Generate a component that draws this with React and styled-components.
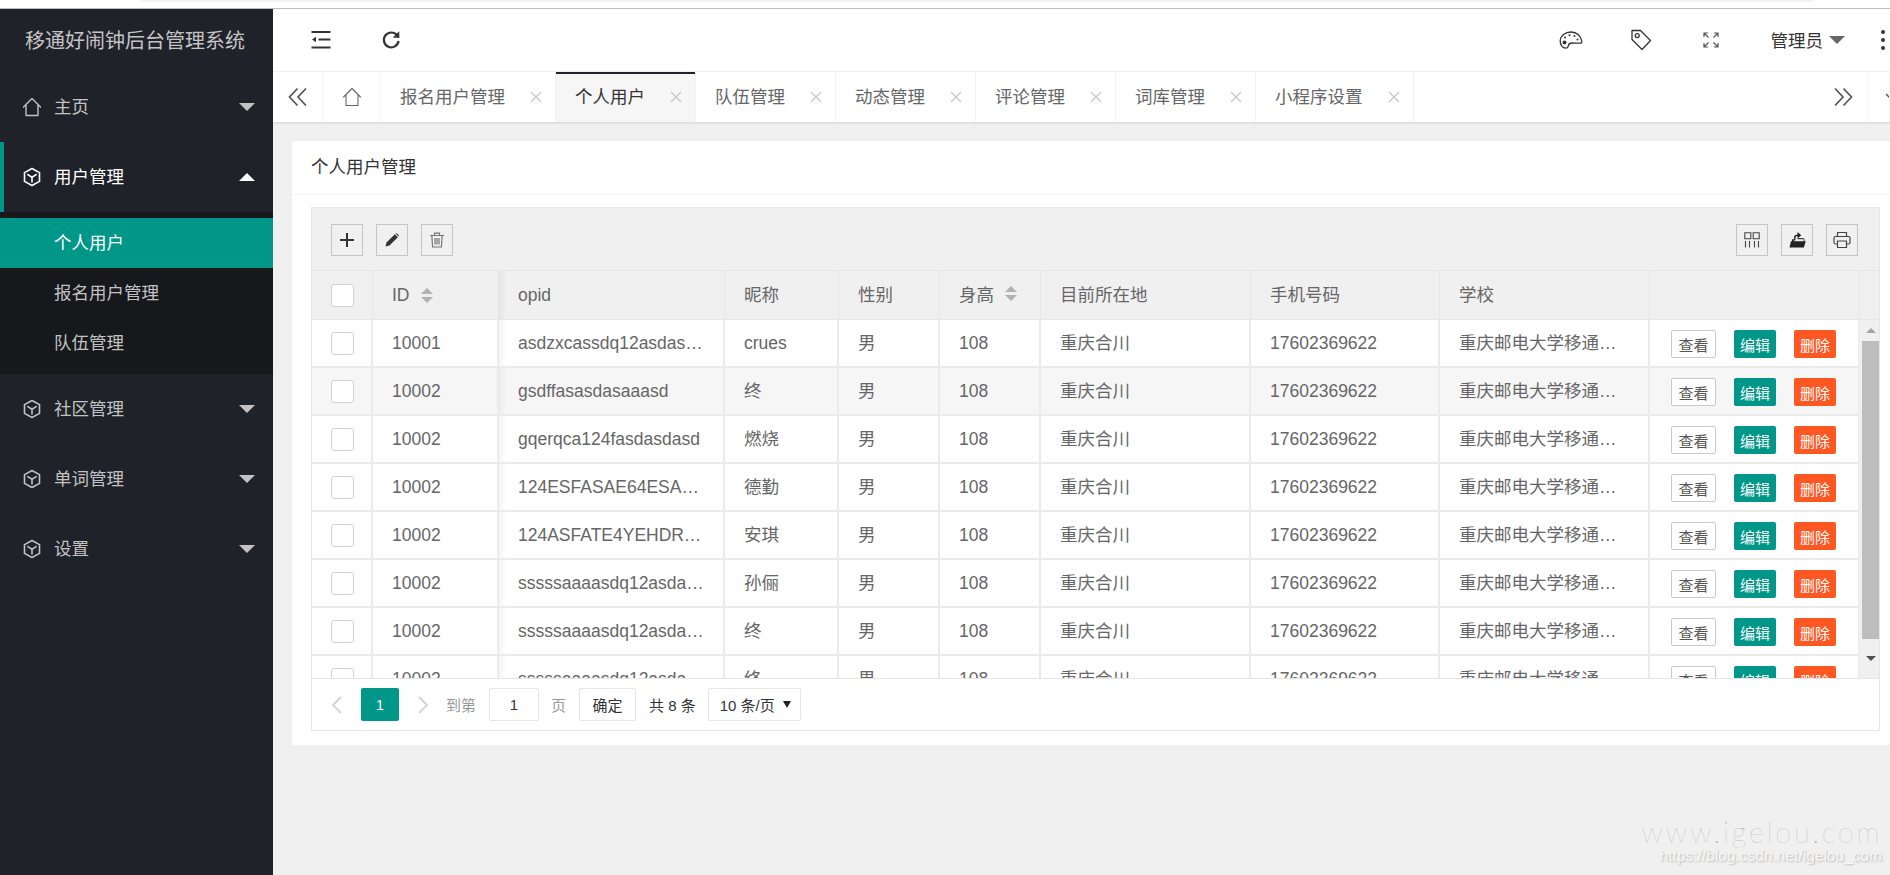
import React from 'react';
import styled, { createGlobalStyle } from 'styled-components';

const FONT = '"Liberation Sans", "Noto Sans CJK SC", sans-serif';
const DATA_COLUMNS = '61px 126px 226px 114px 101px 101px 210px 189px 210px 210px';

const rows = [
  { id: '10001', opid: 'asdzxcassdq12asdasdasdasd', name: 'crues' },
  { id: '10002', opid: 'gsdffasasdasaaasd', name: '终', striped: true },
  { id: '10002', opid: 'gqerqca124fasdasdasd', name: '燃烧' },
  { id: '10002', opid: '124ESFASAE64ESAFASDFASDF', name: '德勤' },
  { id: '10002', opid: '124ASFATE4YEHDRTHDFGDFG', name: '安琪' },
  { id: '10002', opid: 'sssssaaaasdq12asdasdasdasd', name: '孙俪' },
  { id: '10002', opid: 'sssssaaaasdq12asdasdasdasd', name: '终' },
  { id: '10002', opid: 'sssssaaaasdq12asdasdasdasd', name: '终' },
];

const tabs = [
  { label: '报名用户管理' },
  { label: '个人用户', active: true },
  { label: '队伍管理' },
  { label: '动态管理' },
  { label: '评论管理' },
  { label: '词库管理' },
  { label: '小程序设置' },
];

const Svg = ({ size = 20, children, sw = 1.4 }) => (
  <svg width={size} height={size} viewBox="0 0 20 20" fill="none" stroke="currentColor" strokeWidth={sw} strokeLinecap="round" strokeLinejoin="round">
    {children}
  </svg>
);

const HomeIcon = (p) => (
  <Svg {...p}>
    <path d="M1.5 10 10 1.5 18.5 10M4 8.5V18.5H16V8.5" />
  </Svg>
);

const CubeIcon = () => (
  <Svg sw={1.6}>
    <path d="M10 1.5 17.5 5.6V14.4L10 18.5 2.5 14.4V5.6Z" />
    <path d="M5.8 7.6 10 10.2 14.2 7.6M10 10.2V15" />
  </Svg>
);

const ShrinkIcon = () => (
  <svg width="20" height="18" viewBox="0 0 20 18" fill="#333">
    <rect x="0.5" y="0" width="19" height="2" />
    <rect x="7.5" y="7.5" width="12" height="2" />
    <rect x="0.5" y="15.5" width="19" height="2" />
    <path d="M1 8.5 5 5.8V11.2Z" />
  </svg>
);

const RefreshIcon = () => (
  <svg width="20" height="20" viewBox="0 0 20 20" fill="none">
    <path d="M16 5.2A7.4 7.4 0 1 0 17.6 11" stroke="#333" strokeWidth="2.2" />
    <path d="M11.8 7.6 18.4 7.9 18.2 1.2Z" fill="#333" />
  </svg>
);

const PaletteIcon = () => (
  <svg width="24" height="20" viewBox="0 0 24 20" fill="none" stroke="#333" strokeWidth="1.3">
    <path d="M12 2C6 2 1.5 6 1.2 10.5 1 14.5 3.4 18 7 18.2c2.2.1 2-1.6 2.4-3 .5-1.6 1.8-2.2 3.8-2.2 2.6 0 4.2.2 7.6.2 1.8 0 2.3-.6 2-1.8C22 6 18 2 12 2Z" />
    <g fill="#333" stroke="none">
      <circle cx="6" cy="7.5" r="1" />
      <circle cx="10.5" cy="5.2" r="1" />
      <circle cx="15.5" cy="6" r="1" />
      <circle cx="18.5" cy="9.5" r="1" />
      <circle cx="5.5" cy="12.5" r="2" />
    </g>
  </svg>
);

const TagIcon = () => (
  <svg width="22" height="22" viewBox="0 0 22 22" fill="none" stroke="#333" strokeWidth="1.3">
    <path d="M2 1.5 10.5 1.5 20.5 11.5 12 20.5 2 10.5Z" strokeLinejoin="round" />
    <circle cx="7.2" cy="6.6" r="2" />
  </svg>
);

const FullscreenIcon = () => (
  <svg width="18" height="18" viewBox="0 0 18 18" fill="none" stroke="#555" strokeWidth="1.2">
    <path d="M2 6V2H6M2 2 6.5 6.5M16 6V2H12M16 2 11.5 6.5M2 12V16H6M2 16 6.5 11.5M16 12V16H12M16 16 11.5 11.5" />
  </svg>
);

const ChevronsIcon = ({ flip }) => (
  <svg width="20" height="20" viewBox="0 0 20 20" fill="none" stroke="#555" strokeWidth="1.7" style={flip ? { transform: 'scaleX(-1)' } : undefined}>
    <path d="M9.5 1.5 1.5 10 9.5 18.5M18 1.5 10 10 18 18.5" />
  </svg>
);

const ChevronDownIcon = () => (
  <svg width="14" height="8" viewBox="0 0 14 8" fill="none" stroke="#555" strokeWidth="1.4">
    <path d="M1 1 7 7 13 1" />
  </svg>
);

const PlusIcon = () => (
  <svg width="18" height="18" viewBox="0 0 18 18" stroke="#333" strokeWidth="2">
    <path d="M9 2V16M2 9H16" />
  </svg>
);

const PencilIcon = () => (
  <svg width="14" height="14" viewBox="0 0 14 14" fill="#333">
    <path d="M0.5 13.5 1.5 9.5 9.8 1.2 12.8 4.2 4.5 12.5Z" />
    <path d="M10.6.6 11.4 0 14 2.6 13.4 3.4Z" />
  </svg>
);

const TrashIcon = () => (
  <svg width="16" height="16" viewBox="0 0 16 16" fill="none" stroke="#777" strokeWidth="1.2">
    <path d="M1 3.5H15M5.5 3.5V1.2H10.5V3.5M2.8 3.5 3.6 15H12.4L13.2 3.5M6 6V12.5M8 6V12.5M10 6V12.5" />
  </svg>
);

const ColumnsIcon = () => (
  <svg width="16" height="16" viewBox="0 0 16 16" fill="none" stroke="#444" strokeWidth="1.1">
    <path d="M.8.8H6.8V6.8H.8ZM9.2.8H15.2V6.8H9.2Z" />
    <path d="M1.5 9V15.5M5.5 9V15.5M10.5 9V15.5M14.5 9V15.5" />
  </svg>
);

const ExportIcon = () => (
  <svg width="17" height="17" viewBox="0 0 16 16">
    <path d="M2.8 7.8H4.5V9.6H13.8V7H14.5V9.6H15.8L14 15.5H.5L1.8 9.6H2.8Z" fill="#222" />
    <path d="M5.4 9V6C5.4 4.6 6.5 4 8.5 4" fill="none" stroke="#222" strokeWidth="1.3" />
    <path d="M8 1 11.6 4 8 7Z" fill="#222" />
    <path d="M8 7.2H13.8" stroke="#222" strokeWidth="1" />
  </svg>
);

const PrintIcon = () => (
  <svg width="18" height="18" viewBox="0 0 18 18" fill="none" stroke="#444" strokeWidth="1.2" strokeLinejoin="round">
    <path d="M4.5 5.5V1.5H13.5V5.5M4.5 13H2.5Q1 13 1 11.5V7Q1 5.5 2.5 5.5H15.5Q17 5.5 17 7V11.5Q17 13 15.5 13H13.5" />
    <path d="M4.5 10H13.5V16.5H4.5Z" />
  </svg>
);

const GlobalStyle = createGlobalStyle`
  html, body {
    margin: 0;
    padding: 0;
    background: #f0f0f0;
    overflow: hidden;
  }
  * {
    box-sizing: border-box;
  }
`;

const Page = styled.div`
  width: 1890px;
  height: 875px;
  display: flex;
  flex-direction: column;
  overflow: hidden;
  font-family: ${FONT};
  font-size: 17.5px;
  color: #666;
  position: relative;
`;

const BrowserEdge = styled.div`
  height: 9px;
  flex: none;
  background: #fff;
  border-bottom: 1px solid #bdbdbd;
  padding-left: 141px;
  padding-right: 77px;
`;

const BrowserBar = styled.div`
  height: 2px;
  background: #f3f3f3;
`;

const Frame = styled.div`
  flex: 1;
  display: flex;
  min-height: 0;
`;

const Sidebar = styled.aside`
  width: 273px;
  flex: none;
  background: #20222a;
  display: flex;
  flex-direction: column;
`;

const Logo = styled.div`
  height: 63px;
  flex: none;
  padding-left: 25px;
  padding-bottom: 2px;
  display: flex;
  align-items: center;
  font-size: 20px;
  color: #c4c4c4;
  white-space: nowrap;
`;

const NavItem = styled.div`
  height: 70px;
  flex: none;
  display: flex;
  align-items: center;
  padding-left: 22px;
  padding-right: 18px;
  gap: 12px;
  color: ${(p) => (p.$open ? '#fff' : '#c2c2c2')};
  border-left: ${(p) => (p.$open ? '4px solid #009688' : 'none')};
  ${(p) => p.$open && 'padding-left: 18px;'}
`;

const NavLabel = styled.span`
  flex: 1;
  padding-bottom: 3px;
`;

const Caret = styled.i`
  width: 0;
  height: 0;
  border-left: 8px solid transparent;
  border-right: 8px solid transparent;
  ${(p) => (p.$up ? 'border-bottom: 8px solid currentColor;' : 'border-top: 8px solid currentColor;')}
`;

const SubMenu = styled.div`
  background: #17181c;
  padding: 6px 0;
  display: flex;
  flex-direction: column;
`;

const SubItem = styled.div`
  height: 50px;
  padding-left: 54px;
  padding-bottom: 3px;
  display: flex;
  align-items: center;
  color: ${(p) => (p.$active ? '#fff' : '#c2c2c2')};
  background: ${(p) => (p.$active ? '#009688' : 'transparent')};
`;

const Main = styled.main`
  flex: 1;
  min-width: 0;
  display: flex;
  flex-direction: column;
`;

const Header = styled.header`
  height: 63px;
  flex: none;
  background: #fff;
  border-bottom: 1px solid #f2f2f2;
  display: flex;
  align-items: center;
  padding-left: 38px;
  color: #333;
`;

const HeaderLeft = styled.div`
  flex: 1;
  display: flex;
  align-items: center;
  gap: 50px;
`;

const HeaderRight = styled.div`
  display: flex;
  align-items: center;
`;

const HeaderIcon = styled.span`
  width: 70px;
  display: flex;
  justify-content: center;
`;

const UserName = styled.span`
  display: flex;
  align-items: center;
  gap: 6px;
  margin-left: 25px;
  padding-bottom: 2px;
  color: #333;
  i {
    color: #666;
    margin-top: 2px;
  }
`;

const MoreDots = styled.span`
  display: flex;
  flex-direction: column;
  gap: 4px;
  margin-left: 36px;
  margin-right: 5px;
  i {
    width: 4px;
    height: 4px;
    background: #333;
    border-radius: 50%;
  }
`;

const TabBar = styled.nav`
  height: 50px;
  flex: none;
  background: #fff;
  display: flex;
  box-shadow: 0 1px 2px rgba(0, 0, 0, 0.12);
  position: relative;
`;

const TabSide = styled.div`
  width: ${(p) => p.$width}px;
  flex: none;
  display: flex;
  align-items: center;
  justify-content: ${(p) => (p.$start ? 'flex-start' : 'center')};
  padding-left: ${(p) => (p.$start ? '17px' : '0')};
  overflow: hidden;
  color: #666;
  border-right: 1px solid #f4f4f4;
  svg {
    flex: none;
  }
`;

const Tab = styled.div`
  flex: none;
  display: flex;
  align-items: center;
  padding-left: 19px;
  padding-right: 13px;
  gap: 25px;
  border-right: 1px solid #f2f2f2;
  color: ${(p) => (p.$active ? '#333' : '#666')};
  background: ${(p) => (p.$active ? '#f6f6f6' : '#fff')};
  box-shadow: ${(p) => (p.$active ? 'inset 0 2px 0 #20222a' : 'none')};
  white-space: nowrap;
`;

const TabLabel = styled.span`
  padding-bottom: 3px;
`;

const TabClose = styled.svg`
  width: 12px;
  height: 12px;
  stroke: #c6c6c6;
  stroke-width: 1.2;
  flex: none;
`;

const TabFiller = styled.div`
  flex: 1;
`;

const Content = styled.div`
  flex: 1;
  padding: 19px 0 0 19px;
  background: #f0f0f0;
`;

const Card = styled.section`
  background: #fff;
  padding: 0 10px 14px 19px;
  border-radius: 2px;
`;

const CardTitle = styled.div`
  height: 54px;
  margin: 0 -10px 12px -19px;
  padding-left: 19px;
  padding-bottom: 4px;
  display: flex;
  align-items: center;
  border-bottom: 1px solid #f6f6f6;
  color: #333;
`;

const TableBox = styled.div`
  border: 1px solid #e6e6e6;
  display: flex;
  flex-direction: column;
`;

const Toolbar = styled.div`
  height: 63px;
  background: #f0f0f0;
  display: flex;
  align-items: center;
  justify-content: space-between;
  padding: 1px 21px 0 19px;
  border-bottom: 1px solid #e6e6e6;
`;

const ToolGroup = styled.div`
  display: flex;
  gap: 13px;
`;

const ToolButton = styled.button`
  width: 32px;
  height: 32px;
  padding: 0;
  background: transparent;
  border: 1px solid #c4c4c4;
  display: flex;
  align-items: center;
  justify-content: center;
`;

const HeadRow = styled.div`
  display: grid;
  grid-template-columns: ${DATA_COLUMNS} 21px;
  height: 49px;
  background: #f0f0f0;
  border-bottom: 1px solid #e6e6e6;
`;

const Cell = styled.div`
  display: flex;
  align-items: center;
  gap: 11px;
  padding: 0 19px;
  min-width: 0;
  border-right: 1px solid #e6e6e6;
  ${(p) => p.$cjk && 'padding-bottom: 3px;'}
  ${(p) => p.$shaded && 'background: linear-gradient(to right, rgba(0, 0, 0, 0.045), transparent 8px);'}
`;

const EllipsisText = styled.span`
  white-space: nowrap;
  overflow: hidden;
  text-overflow: ellipsis;
`;

const SortCarets = styled.span`
  display: flex;
  flex-direction: column;
  gap: 3px;
  i {
    width: 0;
    height: 0;
    border-left: 6px solid transparent;
    border-right: 6px solid transparent;
  }
  i:first-child {
    border-bottom: 6px solid #b2b2b2;
  }
  i:last-child {
    border-top: 6px solid #b2b2b2;
  }
`;

const Checkbox = styled.span`
  width: 23px;
  height: 23px;
  background: #fff;
  border: 1px solid #d2d2d2;
  border-radius: 3px;
  flex: none;
`;

const BodyWrap = styled.div`
  height: 358px;
  display: flex;
  overflow: hidden;
`;

const BodyRows = styled.div`
  flex: 1;
  min-width: 0;
`;

const Row = styled.div`
  display: grid;
  grid-template-columns: ${DATA_COLUMNS};
  height: 48px;
  background: ${(p) => (p.$striped ? '#f6f6f6' : '#fff')};
  border-bottom: 2px solid #ebebeb;
  ${Cell} {
    border-right-width: 2px;
    border-right-color: #ebebeb;
  }
`;

const ActionCell = styled(Cell)`
  gap: 18px;
  padding: 2px 0 0 21px;
`;

const RowButton = styled.button`
  height: 28px;
  width: ${(p) => (p.$kind === 'plain' ? 45 : 42)}px;
  padding: 0;
  border-radius: 2px;
  font-family: ${FONT};
  font-size: 15px;
  color: ${(p) => (p.$kind === 'plain' ? '#555' : '#fff')};
  background: ${(p) => ({ plain: '#fff', edit: '#009688', del: '#ff5722' })[p.$kind]};
  border: ${(p) => (p.$kind === 'plain' ? '1px solid #c9c9c9' : 'none')};
`;

const Scrollbar = styled.div`
  width: 20px;
  flex: none;
  background: #f0f0f0;
  display: flex;
  flex-direction: column;
  align-items: flex-end;
`;

const ScrollArrow = styled.div`
  width: 100%;
  height: ${(p) => p.$height}px;
  flex: none;
  display: flex;
  justify-content: center;
  align-items: center;
  padding-left: 3px;
  i {
    width: 0;
    height: 0;
    border-left: 5px solid transparent;
    border-right: 5px solid transparent;
    ${(p) => (p.$down ? 'border-top: 5px solid #505050;' : 'border-bottom: 5px solid #a3a3a3;')}
  }
`;

const ScrollThumb = styled.div`
  width: 17px;
  height: 298px;
  flex: none;
  background: #bdbdbd;
`;

const Pagination = styled.div`
  height: 52px;
  background: #fff;
  border-top: 1px solid #e6e6e6;
  display: flex;
  align-items: center;
  padding-left: 19px;
  font-size: 15px;
  color: #333;
`;

const PageArrow = styled.svg`
  width: 12px;
  height: 20px;
  stroke: #d2d2d2;
  stroke-width: 1.8;
  fill: none;
  flex: none;
  margin: ${(p) => p.$margin};
`;

const PageCurrent = styled.span`
  width: 38px;
  height: 33px;
  background: #009688;
  color: #fff;
  border-radius: 2px;
  font-size: 15px;
  display: flex;
  align-items: center;
  justify-content: center;
`;

const PageHint = styled.span`
  color: #999;
  margin: ${(p) => p.$margin};
`;

const PageBox = styled.span`
  height: 33px;
  width: ${(p) => p.$width}px;
  flex: none;
  background: #fff;
  border: 1px solid #e6e6e6;
  border-radius: 2px;
  display: flex;
  align-items: center;
  justify-content: ${(p) => (p.$spread ? 'space-between' : 'center')};
  padding: ${(p) => (p.$spread ? '0 9px 0 11px' : '0')};
  color: #333;
  i {
    width: 0;
    height: 0;
    border-left: 4px solid transparent;
    border-right: 4px solid transparent;
    border-top: 7px solid #222;
  }
`;

const PageTotal = styled.span`
  margin: 0 12px 0 13px;
  color: #333;
`;

const Watermark = styled.div`
  position: absolute;
  right: 8px;
  bottom: 11px;
  text-align: right;
`;

const WatermarkSite = styled.div`
  font-family: Lato, sans-serif;
  font-weight: 100;
  font-size: 29px;
  letter-spacing: 2.7px;
  line-height: 32px;
  color: #b0b0b0;
`;

const WatermarkLink = styled.div`
  font-family: ${FONT};
  font-size: 15.5px;
  line-height: 16px;
  color: #f7f7f7;
  text-shadow: 1px 1px 2px #b4b4b4;
`;

const SideNav = ({ label, icon, open }) => (
  <NavItem $open={open}>
    {icon}
    <NavLabel>{label}</NavLabel>
    <Caret $up={open} />
  </NavItem>
);

const TableRow = ({ id, opid, name, striped }) => (
  <Row $striped={striped}>
    <Cell><Checkbox /></Cell>
    <Cell>{id}</Cell>
    <Cell $shaded><EllipsisText>{opid}</EllipsisText></Cell>
    <Cell $cjk={name !== 'crues'}>{name}</Cell>
    <Cell $cjk>男</Cell>
    <Cell>108</Cell>
    <Cell $cjk>重庆合川</Cell>
    <Cell>17602369622</Cell>
    <Cell $cjk><EllipsisText>重庆邮电大学移通学院数字媒体</EllipsisText></Cell>
    <ActionCell>
      <RowButton $kind="plain">查看</RowButton>
      <RowButton $kind="edit">编辑</RowButton>
      <RowButton $kind="del">删除</RowButton>
    </ActionCell>
  </Row>
);

const App = () => {
  return (
    <Page>
      <GlobalStyle />
      <BrowserEdge><BrowserBar /></BrowserEdge>
      <Frame>
        <Sidebar>
          <Logo>移通好闹钟后台管理系统</Logo>
          <SideNav label="主页" icon={<HomeIcon />} />
          <SideNav label="用户管理" icon={<CubeIcon />} open />
          <SubMenu>
            <SubItem $active>个人用户</SubItem>
            <SubItem>报名用户管理</SubItem>
            <SubItem>队伍管理</SubItem>
          </SubMenu>
          <SideNav label="社区管理" icon={<CubeIcon />} />
          <SideNav label="单词管理" icon={<CubeIcon />} />
          <SideNav label="设置" icon={<CubeIcon />} />
        </Sidebar>
        <Main>
          <Header>
            <HeaderLeft>
              <ShrinkIcon />
              <RefreshIcon />
            </HeaderLeft>
            <HeaderRight>
              <HeaderIcon><PaletteIcon /></HeaderIcon>
              <HeaderIcon><TagIcon /></HeaderIcon>
              <HeaderIcon><FullscreenIcon /></HeaderIcon>
              <UserName>管理员<Caret /></UserName>
              <MoreDots><i /><i /><i /></MoreDots>
            </HeaderRight>
          </Header>
          <TabBar>
            <TabSide $width={50}><ChevronsIcon /></TabSide>
            <TabSide $width={58}><HomeIcon size={20} sw={1.1} /></TabSide>
            {tabs.map((t) => (
              <Tab key={t.label} $active={t.active}>
                <TabLabel>{t.label}</TabLabel>
                <TabClose viewBox="0 0 12 12"><path d="M1 1 11 11M11 1 1 11" /></TabClose>
              </Tab>
            ))}
            <TabFiller />
            <TabSide $width={50}><ChevronsIcon flip /></TabSide>
            <TabSide $width={22} $start><ChevronDownIcon /></TabSide>
          </TabBar>
          <Content>
            <Card>
              <CardTitle>个人用户管理</CardTitle>
              <TableBox>
                <Toolbar>
                  <ToolGroup>
                    <ToolButton><PlusIcon /></ToolButton>
                    <ToolButton><PencilIcon /></ToolButton>
                    <ToolButton><TrashIcon /></ToolButton>
                  </ToolGroup>
                  <ToolGroup>
                    <ToolButton><ColumnsIcon /></ToolButton>
                    <ToolButton><ExportIcon /></ToolButton>
                    <ToolButton><PrintIcon /></ToolButton>
                  </ToolGroup>
                </Toolbar>
                <HeadRow>
                  <Cell><Checkbox /></Cell>
                  <Cell>ID<SortCarets><i /><i /></SortCarets></Cell>
                  <Cell $shaded>opid</Cell>
                  <Cell $cjk>昵称</Cell>
                  <Cell $cjk>性别</Cell>
                  <Cell $cjk>身高<SortCarets><i /><i /></SortCarets></Cell>
                  <Cell $cjk>目前所在地</Cell>
                  <Cell $cjk>手机号码</Cell>
                  <Cell $cjk>学校</Cell>
                  <Cell />
                  <Cell />
                </HeadRow>
                <BodyWrap>
                  <BodyRows>
                    {rows.map((r, i) => (
                      <TableRow key={i} {...r} />
                    ))}
                  </BodyRows>
                  <Scrollbar>
                    <ScrollArrow $height={21}><i /></ScrollArrow>
                    <ScrollThumb />
                    <ScrollArrow $height={39} $down><i /></ScrollArrow>
                  </Scrollbar>
                </BodyWrap>
                <Pagination>
                  <PageArrow viewBox="0 0 12 20" $margin="0 18px 0 0"><path d="M10 2 2 10 10 18" /></PageArrow>
                  <PageCurrent>1</PageCurrent>
                  <PageArrow viewBox="0 0 12 20" $margin="0 17px 0 18px"><path d="M2 2 10 10 2 18" /></PageArrow>
                  <PageHint $margin="0 13px 0 0">到第</PageHint>
                  <PageBox $width={50}>1</PageBox>
                  <PageHint $margin="0 13px 0 12px">页</PageHint>
                  <PageBox $width={57}>确定</PageBox>
                  <PageTotal>共 8 条</PageTotal>
                  <PageBox $width={93} $spread>10 条/页<i /></PageBox>
                </Pagination>
              </TableBox>
            </Card>
          </Content>
        </Main>
      </Frame>
      <Watermark>
        <WatermarkSite>www.igelou.com</WatermarkSite>
        <WatermarkLink>https://blog.csdn.net/igelou_com</WatermarkLink>
      </Watermark>
    </Page>
  );
};

export default App;
